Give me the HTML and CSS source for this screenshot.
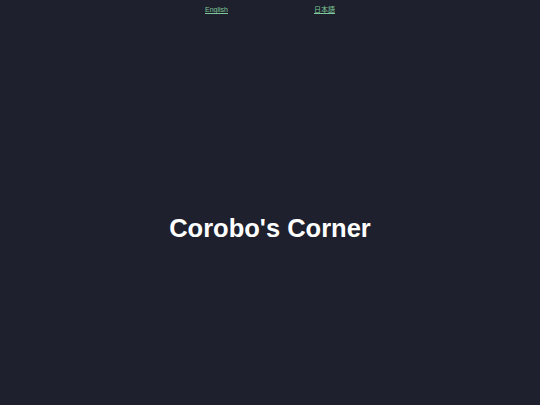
FILE: index.html
```html
<!DOCTYPE html>
<html>
  <head>
    <link rel="stylesheet" href="styles.css">
  </head>
  <body>
    <nav class="lang-nav">
      <a class="lang-link" href="#">English</a>
      <a class="lang-link" href="#">日本語</a>
    </nav>
    <main class="hero">
      <h1 class="hero-title">Corobo's Corner</h1>
    </main>
  </body>
</html>
```

FILE: styles.css
```css
* {
  box-sizing: border-box;
}
html,
body {
  height: 100%;
}
body {
  margin: 0;
  background-color: #1e202d;
  font-family: "Liberation Sans", Arial, "Noto Sans CJK JP", sans-serif;
  display: flex;
  flex-direction: column;
}
.lang-nav {
  display: flex;
  justify-content: center;
  align-items: baseline;
  gap: 86px;
  padding-top: 4px;
}
.lang-link {
  font-size: 7px;
  color: #7fc79a;
  text-decoration: underline;
}
.hero {
  flex: 1;
  display: flex;
  justify-content: center;
  align-items: center;
  padding-top: 38px;
}
.hero-title {
  margin: 0;
  color: #ffffff;
  font-size: 25.5px;
  font-weight: bold;
}
```
